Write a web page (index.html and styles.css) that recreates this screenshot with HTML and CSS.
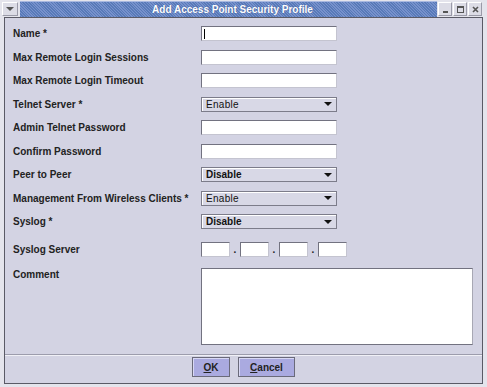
FILE: index.html
```
<!DOCTYPE html>
<html lang="en">
<head>
<meta charset="UTF-8">
<title>Add Access Point Security Profile</title>
<link rel="stylesheet" href="styles.css">
</head>
<body>
<div class="window">
  <div class="titlebar">
    <div class="menu-btn">
      <svg width="8" height="5" viewBox="0 0 8 5"><path d="M0 0 L8 0 L4 4 Z" fill="#555"/></svg>
    </div>
    <div class="title-band"><span class="title">Add Access Point Security Profile</span></div>
    <div class="ctrl-btns">
      <div class="ctrl"><svg width="7" height="7" viewBox="0 0 7 7"><rect x="1" y="5" width="5" height="2" fill="#555"/></svg></div>
      <div class="ctrl"><svg width="7" height="7" viewBox="0 0 7 7"><rect x="0.5" y="0.5" width="6" height="6" fill="none" stroke="#555"/><rect x="0" y="0" width="7" height="2" fill="#555"/></svg></div>
      <div class="ctrl"><svg width="7" height="7" viewBox="0 0 7 7"><path d="M1 1 L6 6 M6 1 L1 6" stroke="#555" stroke-width="1.6"/></svg></div>
    </div>
  </div>

  <div class="content">
    <div class="form">
      <div class="row">
        <label>Name *</label>
        <div class="text-field"><span class="caret"></span></div>
      </div>
      <div class="row">
        <label>Max Remote Login Sessions</label>
        <div class="text-field"></div>
      </div>
      <div class="row">
        <label>Max Remote Login Timeout</label>
        <div class="text-field"></div>
      </div>
      <div class="row">
        <label>Telnet Server *</label>
        <div class="combo"><span class="light">Enable</span><span class="arrow"></span></div>
      </div>
      <div class="row">
        <label>Admin Telnet Password</label>
        <div class="text-field"></div>
      </div>
      <div class="row">
        <label>Confirm Password</label>
        <div class="text-field"></div>
      </div>
      <div class="row">
        <label>Peer to Peer</label>
        <div class="combo"><span>Disable</span><span class="arrow"></span></div>
      </div>
      <div class="row">
        <label>Management From Wireless Clients *</label>
        <div class="combo"><span class="light">Enable</span><span class="arrow"></span></div>
      </div>
      <div class="row">
        <label>Syslog *</label>
        <div class="combo"><span>Disable</span><span class="arrow"></span></div>
      </div>
      <div class="row row-ip">
        <label>Syslog Server</label>
        <div class="ip">
          <div class="text-field octet"></div><span class="dot">.</span>
          <div class="text-field octet"></div><span class="dot">.</span>
          <div class="text-field octet"></div><span class="dot">.</span>
          <div class="text-field octet"></div>
        </div>
      </div>
      <div class="row row-comment">
        <label>Comment</label>
        <div class="text-area"></div>
      </div>
    </div>

    <div class="buttons">
      <button class="btn btn-ok"><u>O</u>K</button>
      <button class="btn btn-cancel"><u>C</u>ancel</button>
    </div>
  </div>
</div>
</body>
</html>
```

FILE: styles.css
```
*{
  box-sizing: border-box;
}
body{
  margin: 0;
  padding: 0;
  background-color: #e4e4ec;
  font-family: 'Liberation Sans', Arial, sans-serif;
  font-size: 10px;
  color: #222;
}
.window {
  width: 487px;
  height: 387px;
  background-color: #e4e4ec;
  padding: 0 4px 3px 4px;
  display: flex;
  flex-direction: column;
}

/* title bar */
.titlebar {
  height: 17px;
  display: flex;
  margin: 0 -4px;
}
.menu-btn {
  width: 16px;
  height: 14px;
  margin: 2px 2px 0 2px;
  background-color: #dcdce6;
  border: 1px solid #9a9aa8;
  border-top-color: #fff;
  border-left-color: #fff;
  display: flex;
  align-items: center;
  justify-content: center;
}
.title-band {
  flex: 1;
  margin-top: 1px;
  padding-left: 8px;
  background-color: #6682c2;
  background-image: repeating-linear-gradient(45deg, #587ab8 0, #587ab8 1px, #7791cc 1px, #7791cc 2px);
  border-top: 1px solid #a8b8e0;
  display: flex;
  align-items: center;
  justify-content: center;
}
.title {
  color: #fff;
  font-weight: bold;
  font-size: 10px;
  text-shadow: 0 0 1px #3a5490;
}
.ctrl-btns {
  display: flex;
  gap: 1px;
  padding: 2px 5px 0 1px;
}
.ctrl {
  width: 14px;
  height: 14px;
  background-color: #dcdce6;
  border: 1px solid #9a9aa8;
  border-top-color: #fff;
  border-left-color: #fff;
  display: flex;
  align-items: center;
  justify-content: center;
}

/* dialog body */
.content {
  flex: 1;
  background-color: #d3d3e3;
  border: 1px solid #5a5a66;
  display: flex;
  flex-direction: column;
}
.form {
  flex: 1;
  padding: 8px 0 0 8px;
  display: flex;
  flex-direction: column;
  gap: 8.5px;
}
.row {
  display: grid;
  grid-template-columns: 188px 1fr;
  align-items: center;
  height: 15px;
}
.row label {
  font-weight: bold;
  white-space: nowrap;
}
.row-ip {
  margin-top: 4.5px;
}
.row-comment {
  margin-top: 2.5px;
  height: 77px;
  align-items: start;
}
.row-comment label {
  padding-top: 1px;
}
.text-field {
  width: 136px;
  height: 15px;
  background-color: #fff;
  border: 1px solid #c4c4d0;
  border-top-color: #727280;
  border-left-color: #727280;
  display: flex;
  align-items: center;
  padding-left: 2px;
}
.caret {
  width: 1px;
  height: 10px;
  background-color: #000;
}
.combo {
  width: 136px;
  height: 15px;
  background-color: #d8d8e6;
  border: 1px solid #7c7c8a;
  box-shadow: inset 1px 1px #fff;
  display: flex;
  align-items: center;
  justify-content: space-between;
  padding: 0 4px 0 4px;
  font-weight: bold;
  color: #111;
}
.combo .light {
  font-weight: normal;
  letter-spacing: 0.3px;
}
.arrow {
  width: 0;
  height: 0;
  border-left: 4px solid transparent;
  border-right: 4px solid transparent;
  border-top: 4px solid #111;
}
.ip {
  display: flex;
  align-items: center;
}
.octet {
  width: 29px;
}
.dot {
  width: 10px;
  text-align: center;
  font-weight: bold;
}
.text-area {
  width: 272px;
  height: 77px;
  background-color: #fff;
  border: 1px solid #a8a8b4;
  border-top-color: #727280;
  border-left-color: #727280;
  border-bottom-color: #727280;
}

/* button bar */
.buttons {
  height: 29px;
  border-top: 1px solid #9c9cac;
  box-shadow: inset 0 1px #f0f0f6;
  display: flex;
  justify-content: center;
  align-items: flex-start;
  gap: 8px;
  padding-top: 2px;
}
.btn {
  height: 20px;
  background-color: #aaaae0;
  border: 1px solid #6a6a7a;
  box-shadow: inset 1px 1px #d8d8f4;
  font-family: 'Liberation Sans', Arial, sans-serif;
  font-size: 10px;
  font-weight: bold;
  color: #222;
  padding: 0;
}
.btn-ok {
  width: 38px;
}
.btn-cancel {
  width: 57px;
}
```
